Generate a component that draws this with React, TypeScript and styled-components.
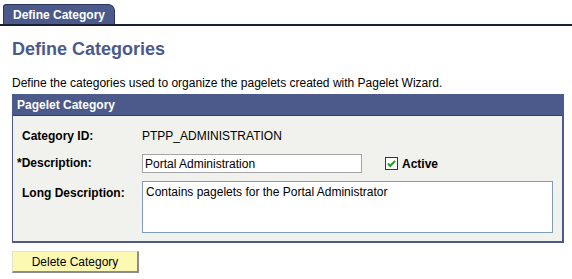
import { createGlobalStyle, styled } from "styled-components";

const GlobalStyle = createGlobalStyle`
  body {
    margin: 0;
    background: #ffffff;
    font-family: "Liberation Sans", Arial, sans-serif;
    font-size: 12px;
    color: #000000;
  }
`;

const Page = styled.div`
  display: flex;
  flex-direction: column;
  width: 572px;
`;

const TabStrip = styled.div`
  display: flex;
  align-items: flex-end;
  padding: 4px 0 0 3px;
  border-bottom: 2px solid #1a1f33;
  height: 20px;
`;

const Tab = styled.div`
  display: flex;
  align-items: center;
  height: 20px;
  box-sizing: border-box;
  padding: 0 0 0 9px;
  width: 112px;
  background: #4b5a8b;
  border: 1px solid #2a3560;
  border-bottom: none;
  border-radius: 3px 7px 0 0;
  color: #ffffff;
  font-weight: bold;
  font-size: 12px;
`;

const Content = styled.div`
  display: flex;
  flex-direction: column;
  padding: 0 8px 0 12px;
`;

const Title = styled.h1`
  margin: 12px 0 0 0;
  font-size: 18px;
  line-height: 22px;
  font-weight: bold;
  color: #4a5a8c;
`;

const Intro = styled.p`
  margin: 16px 0 0 0;
  line-height: 14px;
  font-size: 12px;
`;

const Panel = styled.section`
  margin-top: 4px;
  width: 552px;
  box-sizing: border-box;
  border: 1px solid #4b5a8b;
  border-right-width: 2px;
  border-bottom-width: 2px;
  background: #f1f2ed;
`;

const PanelHeader = styled.div`
  display: flex;
  align-items: center;
  height: 20px;
  padding-left: 4px;
  background: #4b5a8b;
  border-bottom: 1px solid #2f3b6a;
  color: #ffffff;
  font-weight: bold;
`;

const Fields = styled.div`
  display: grid;
  grid-template-columns: 120px 220px auto;
  row-gap: 8px;
  align-items: center;
  padding: 11px 0 8px 9px;
`;

const Label = styled.div<{ $required?: boolean; $top?: boolean }>`
  font-weight: bold;
  line-height: 19px;
  margin-left: ${(p) => (p.$required ? "-5px" : "0")};
  align-self: ${(p) => (p.$top ? "start" : "center")};
  padding-top: ${(p) => (p.$top ? "3px" : "0")};
`;

const Value = styled.div`
  line-height: 19px;
  grid-column: span 2;
`;

const TextInput = styled.input`
  width: 220px;
  height: 19px;
  box-sizing: border-box;
  margin: 0;
  padding: 0 2px;
  border: 1px solid #a5a5a5;
  background: #ffffff;
  font-family: inherit;
  font-size: 12px;
  color: #000000;
  outline: none;
`;

const CheckWrap = styled.label`
  display: flex;
  align-items: center;
  gap: 4px;
  margin-left: 23px;
  font-weight: bold;
`;

const TextArea = styled.textarea`
  grid-column: span 2;
  width: 411px;
  height: 52px;
  box-sizing: border-box;
  margin: 0;
  padding: 3px 3px;
  border: 1px solid #7f9db9;
  background: #ffffff;
  font-family: inherit;
  font-size: 12px;
  line-height: 14px;
  color: #000000;
  resize: none;
  outline: none;
`;

const Button = styled.button`
  margin-top: 8px;
  width: 127px;
  height: 22px;
  padding: 0;
  background: #fcf9b3;
  border: 1px solid #e4e2c4;
  border-right: 2px solid #8c8c8c;
  border-bottom: 2px solid #8c8c8c;
  font-family: inherit;
  font-size: 12px;
  color: #000000;
  cursor: pointer;
`;

const CheckBox = () => (
  <svg width="13" height="13" viewBox="0 0 13 13">
    <rect x="0.5" y="0.5" width="12" height="12" fill="#ffffff" stroke="#1c3a5c" />
    <path d="M3 6.5 L5.3 9 L10 3.8" fill="none" stroke="#21a121" strokeWidth="2" />
  </svg>
);

export default function App() {
  return (
    <Page>
      <GlobalStyle />
      <TabStrip>
        <Tab>Define Category</Tab>
      </TabStrip>
      <Content>
        <Title>Define Categories</Title>
        <Intro>Define the categories used to organize the pagelets created with Pagelet Wizard.</Intro>
        <Panel>
          <PanelHeader>Pagelet Category</PanelHeader>
          <Fields>
            <Label>Category ID:</Label>
            <Value>PTPP_ADMINISTRATION</Value>

            <Label $required>*Description:</Label>
            <TextInput defaultValue="Portal Administration" />
            <CheckWrap>
              <CheckBox />
              Active
            </CheckWrap>

            <Label $top>Long Description:</Label>
            <TextArea defaultValue="Contains pagelets for the Portal Administrator" />
          </Fields>
        </Panel>
        <div>
          <Button>Delete Category</Button>
        </div>
      </Content>
    </Page>
  );
}
